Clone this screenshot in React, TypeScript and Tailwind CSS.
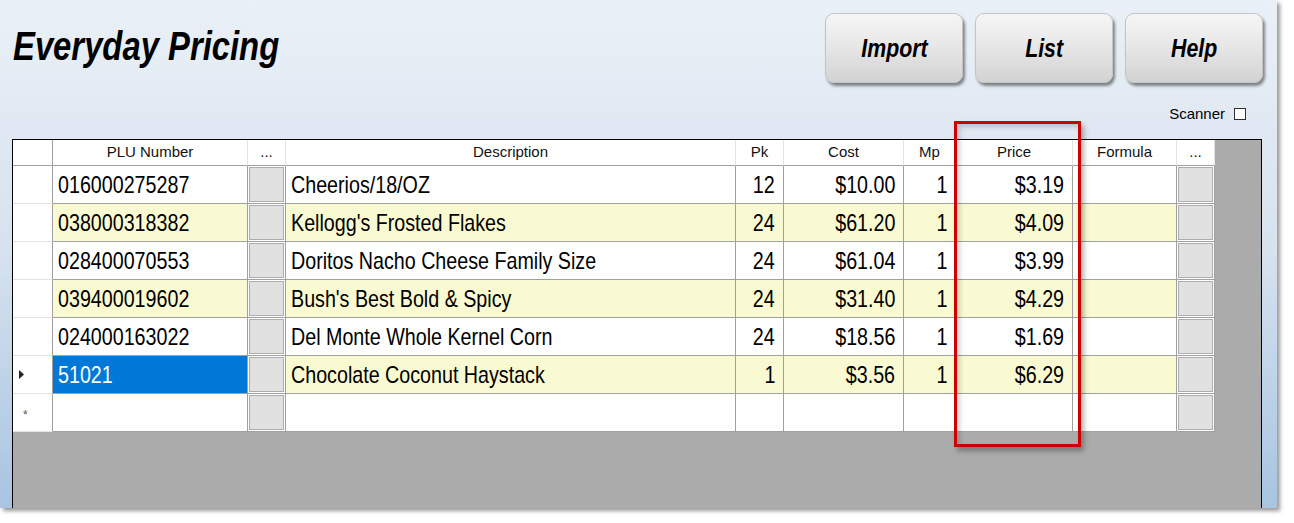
import React from 'react'

// Narrow face is not installed, so Liberation Sans is squeezed to Arial Narrow's width
const narrow = "font-['Liberation_Sans',sans-serif] inline-block scale-x-[0.82]"

const columns = [
  { key: 'plu', title: 'PLU Number', w: 'w-[195px]', align: 'left' },
  { key: 'b1', title: '...', w: 'w-[38px]', align: 'button' },
  { key: 'desc', title: 'Description', w: 'w-[450px]', align: 'left' },
  { key: 'pk', title: 'Pk', w: 'w-[48px]', align: 'right' },
  { key: 'cost', title: 'Cost', w: 'w-[120px]', align: 'right' },
  { key: 'mp', title: 'Mp', w: 'w-[52px]', align: 'right' },
  { key: 'price', title: 'Price', w: 'w-[117px]', align: 'right' },
  { key: 'formula', title: 'Formula', w: 'w-[104px]', align: 'left' },
  { key: 'b2', title: '...', w: 'w-[38px]', align: 'button' },
]

const rows: Record<string, string>[] = [
  { plu: '016000275287', desc: 'Cheerios/18/OZ', pk: '12', cost: '$10.00', mp: '1', price: '$3.19' },
  { plu: '038000318382', desc: "Kellogg's Frosted Flakes", pk: '24', cost: '$61.20', mp: '1', price: '$4.09' },
  { plu: '028400070553', desc: 'Doritos Nacho Cheese Family Size', pk: '24', cost: '$61.04', mp: '1', price: '$3.99' },
  { plu: '039400019602', desc: "Bush's Best Bold & Spicy", pk: '24', cost: '$31.40', mp: '1', price: '$4.29' },
  { plu: '024000163022', desc: 'Del Monte Whole Kernel Corn', pk: '24', cost: '$18.56', mp: '1', price: '$1.69' },
  { plu: '51021', desc: 'Chocolate Coconut Haystack', pk: '1', cost: '$3.56', mp: '1', price: '$6.29' },
  {},
]

function PushButton({ label }: { label: string }) {
  return (
    <button className="w-[138px] h-[70px] rounded-[9px] border border-[#c4c4c4] bg-gradient-to-b from-[#f6f6f6] via-[#e6e6e6] to-[#d2d2d2] shadow-[2px_3px_3px_rgba(0,0,0,0.45)] flex items-center justify-center">
      <span className={`${narrow} origin-center text-[26px] font-bold italic text-black`}>{label}</span>
    </button>
  )
}

function Cell({ col, value, rowIndex }: { col: (typeof columns)[number]; value?: string; rowIndex: number }) {
  const isNew = rowIndex === rows.length - 1
  const yellow = rowIndex % 2 === 1 && !isNew
  const selected = rowIndex === 5 && col.key === 'plu'

  if (col.align === 'button') {
    return (
      <div className={`${col.w} h-full border-r border-b border-[#a0a0a0] bg-white p-[1px]`}>
        <div className="w-full h-full border border-[#adadad] bg-[#e1e1e1]" />
      </div>
    )
  }

  const bg = selected ? 'bg-[#0078d7] text-white' : yellow ? 'bg-[#fafad2] text-black' : 'bg-white text-black'
  const right = col.align === 'right'
  return (
    <div className={`${col.w} h-full border-r border-b border-[#a0a0a0] ${bg} flex items-center ${right ? 'justify-end pr-[8px]' : 'justify-start pl-[5px]'}`}>
      <span className={`${narrow} ${right ? 'origin-right' : 'origin-left'} whitespace-nowrap text-[24px] leading-none`}>{value}</span>
    </div>
  )
}

export default function App() {
  return (
    <div className="w-[1294px] h-[523px] bg-white overflow-hidden font-['Liberation_Sans',sans-serif]">
      <div className="relative w-[1277px] h-[508px] bg-gradient-to-b from-[#eaf0f7] via-[#d6e2ee] to-[#a8c4e1] shadow-[3px_3px_4px_rgba(0,0,0,0.4)] flex flex-col">
        {/* Top bar */}
        <div className="h-[139px] flex justify-between">
          <h1 className="pl-[13px] pt-[26px] text-[40px] leading-[40px] font-bold italic text-black">
            <span className={`${narrow} origin-left whitespace-nowrap`}>Everyday Pricing</span>
          </h1>
          <div className="pt-[13px] pr-[14px] flex flex-col items-end">
            <div className="flex gap-[12px]">
              <PushButton label="Import" />
              <PushButton label="List" />
              <PushButton label="Help" />
            </div>
            <div className="mt-[22px] mr-[17px] flex items-center gap-[9px]">
              <span className="text-[15px] leading-[17px] text-black">Scanner</span>
              <span className="w-[12px] h-[12px] border border-[#333] bg-white" />
            </div>
          </div>
        </div>

        {/* Data grid */}
        <div className="flex-1 ml-[12px] mr-[15px] border-l border-t border-r border-black bg-[#ababab]">
          <div className="flex h-[26px]">
            <div className="w-[40px] h-full bg-white border-r border-b border-[#a0a0a0]" />
            {columns.map((c) => (
              <div
                key={c.key}
                className={`${c.w} h-full bg-white border-r border-b border-r-[#e4e4e4] border-b-[#a0a0a0] flex items-center justify-center text-[15px] text-[#111]`}
              >
                {c.title}
              </div>
            ))}
          </div>
          {rows.map((r, i) => (
            <div key={i} className="flex h-[38px]">
              <div className="w-[40px] h-full bg-white border-r border-r-[#a0a0a0] border-b border-b-[#e2e2e2] flex items-center pl-[6px]">
                {i === 5 && (
                  <svg width="5" height="9" viewBox="0 0 5 9">
                    <path d="M0 0 L5 4.5 L0 9 Z" fill="#222" />
                  </svg>
                )}
                {i === 6 && <span className="pl-[4px] pt-[4px] text-[12px] text-[#555] leading-none">*</span>}
              </div>
              {columns.map((c) => (
                <Cell key={c.key} col={c} value={r[c.key]} rowIndex={i} />
              ))}
            </div>
          ))}
        </div>

        {/* Highlight box around Price column */}
        <div className="absolute left-[954px] top-[121px] w-[127px] h-[326px] border-[3px] border-[#cc0000] shadow-[3px_4px_5px_rgba(0,0,0,0.3),inset_3px_3px_5px_rgba(0,0,0,0.18)]" />
      </div>
    </div>
  )
}
